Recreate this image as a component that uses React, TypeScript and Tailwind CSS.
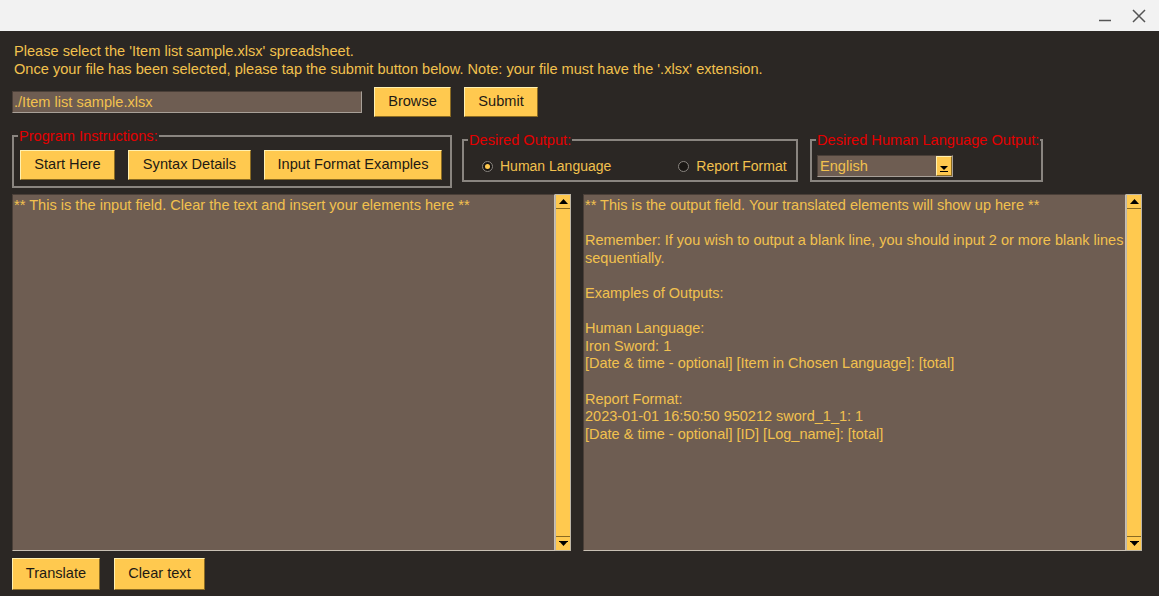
import React from "react";

const btn =
  "bg-[#ffc94f] text-[#1e1a14] text-[14.6px] border border-t-[#fff0b0] border-l-[#fff0b0] border-b-[#8a6a22] border-r-[#8a6a22] flex items-center justify-center";

const outputText = `** This is the output field. Your translated elements will show up here **

Remember: If you wish to output a blank line, you should input 2 or more blank lines
sequentially.

Examples of Outputs:

Human Language:
Iron Sword: 1
[Date & time - optional] [Item in Chosen Language]: [total]

Report Format:
2023-01-01 16:50:50 950212 sword_1_1: 1
[Date & time - optional] [ID] [Log_name]: [total]`;

function Group({ label, className, children }: { label: string; className: string; children: React.ReactNode }) {
  return (
    <div className={"relative border-2 border-[#8a8580] " + className}>
      <span className="absolute -top-[9px] left-[4px] bg-[#2b2724] px-[1px] whitespace-nowrap text-[14.6px] leading-[16px] text-[#e30000]">
        {label}
      </span>
      {children}
    </div>
  );
}

function Scrollbar() {
  return (
    <div className="w-[16px] h-full flex flex-col bg-[#ffc94f] border border-[#bdb6a8]">
      <div className="h-[14px] flex items-center justify-center border-b border-[#8a6a22]">
        <svg width="9" height="5" viewBox="0 0 9 5"><polygon points="4.5,0 9,5 0,5" fill="#000" /></svg>
      </div>
      <div className="flex-1" />
      <div className="h-[14px] flex items-center justify-center border-t border-[#8a6a22]">
        <svg width="9" height="6" viewBox="0 0 9 6"><polygon points="0,0 9,0 4.5,5" fill="#000" /><rect x="0" y="0" width="9" height="1" fill="#000" /></svg>
      </div>
    </div>
  );
}

export default function App() {
  return (
    <div className="w-[1159px] h-[596px] flex flex-col bg-[#2b2724] font-['Liberation_Sans',Arial,sans-serif] overflow-hidden">
      <div className="h-[31px] bg-[#f2f2f2] flex items-center justify-end gap-[20px] pr-[13px]">
        <svg width="14" height="14" viewBox="0 0 14 14"><line x1="1" y1="11.5" x2="13" y2="11.5" stroke="#555" strokeWidth="1.5" /></svg>
        <svg width="14" height="14" viewBox="0 0 14 14"><path d="M1 1 L13 13 M13 1 L1 13" stroke="#555" strokeWidth="1.5" /></svg>
      </div>

      <div className="flex-1 flex flex-col px-[12px] pt-[11px]">
        <div className="text-[14.6px] leading-[18px] text-[#f2c14e] pl-[2px]">
          <div>Please select the 'Item list sample.xlsx' spreadsheet.</div>
          <div>Once your file has been selected, please tap the submit button below. Note: your file must have the '.xlsx' extension.</div>
        </div>

        <div className="flex items-center mt-[9px] h-[30px]">
          <div className="w-[350px] h-[22px] bg-[#6e5d52] border border-t-[#4a3f38] border-l-[#4a3f38] border-b-[#a8a098] border-r-[#a8a098] text-[14.6px] leading-[21px] text-[#f2c14e] pl-[1px]">
            ./Item list sample.xlsx
          </div>
          <button className={btn + " ml-[12px] w-[77px] h-[30px]"}>Browse</button>
          <button className={btn + " ml-[13px] w-[74px] h-[30px]"}>Submit</button>
        </div>

        <div className="flex items-start mt-[18px]">
          <Group label="Program Instructions:" className="w-[440px] h-[53px] flex items-start gap-[13px] px-[6px] pt-[13px]">
            <button className={btn + " w-[95px] h-[30px]"}>Start Here</button>
            <button className={btn + " w-[123px] h-[30px]"}>Syntax Details</button>
            <button className={btn + " w-[178px] h-[30px]"}>Input Format Examples</button>
          </Group>
          <Group label="Desired Output:" className="ml-[10px] mt-[4px] w-[336px] h-[43px] flex items-center pt-[12px] text-[14px] text-[#f2c14e]">
            <div className="flex items-center ml-[18px]">
              <span className="w-[11px] h-[11px] rounded-full bg-[#1a1714] border border-[#8a8580] flex items-center justify-center">
                <span className="w-[5px] h-[5px] rounded-full bg-[#ffc94f]" />
              </span>
              <span className="ml-[7px]">Human Language</span>
            </div>
            <div className="flex items-center ml-[67px]">
              <span className="w-[11px] h-[11px] rounded-full bg-[#1a1714] border border-[#8a8580]" />
              <span className="ml-[7px]">Report Format</span>
            </div>
          </Group>
          <Group label="Desired Human Language Output:" className="ml-[12px] mt-[4px] w-[233px] h-[43px] pt-[14px] pl-[5px]">
            <div className="w-[136px] h-[22px] flex bg-[#6e5d52] border border-t-[#4a3f38] border-l-[#4a3f38] border-b-[#a8a098] border-r-[#a8a098]">
              <div className="flex-1 text-[14.6px] leading-[20px] text-[#f2c14e] pl-[2px]">English</div>
              <div className="w-[16px] h-full bg-[#ffc94f] border border-t-[#fff0b0] border-l-[#fff0b0] border-b-[#8a6a22] border-r-[#8a6a22] flex items-end justify-center pb-[3px]">
                <svg width="8" height="6" viewBox="0 0 8 6"><polygon points="0,0 8,0 4,4" fill="#000" /><rect x="0" y="5" width="8" height="1" fill="#000" /></svg>
              </div>
            </div>
          </Group>
        </div>

        <div className="flex mt-[6px] h-[357px]">
          <div className="w-[543px] h-full bg-[#6e5d52] border border-t-[#4a3f38] border-l-[#4a3f38] border-b-[#c8c0b4] border-r-[#c8c0b4] text-[14.6px] leading-[17.6px] text-[#f2c14e] pl-[1px] pt-[2px]">
            ** This is the input field. Clear the text and insert your elements here **
          </div>
          <Scrollbar />
          <div className="ml-[12px] w-[543px] h-full bg-[#6e5d52] border border-t-[#4a3f38] border-l-[#4a3f38] border-b-[#c8c0b4] border-r-[#c8c0b4] text-[14.5px] leading-[17.6px] text-[#f2c14e] pl-[1px] pt-[2px] whitespace-pre overflow-hidden">
            {outputText}
          </div>
          <Scrollbar />
        </div>

        <div className="flex gap-[14px] mt-[7px]">
          <button className={btn + " w-[88px] h-[32px]"}>Translate</button>
          <button className={btn + " w-[91px] h-[32px]"}>Clear text</button>
        </div>
      </div>
    </div>
  );
}
